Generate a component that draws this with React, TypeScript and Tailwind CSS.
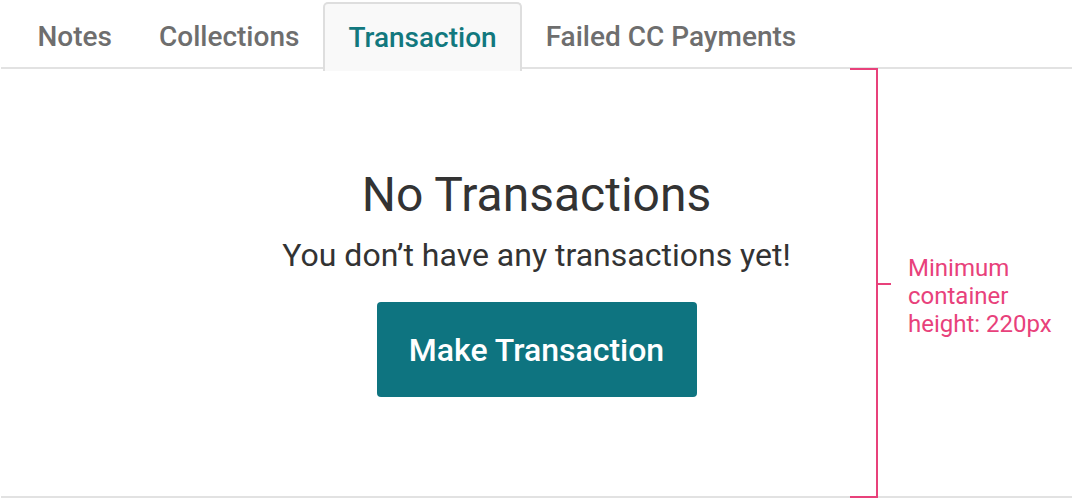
import { useState } from 'react';

const tabs = ['Notes', 'Collections', 'Transaction', 'Failed CC Payments'];

export default function App() {
  const [active, setActive] = useState('Transaction');

  return (
    <div className="relative w-[1074px] h-[502px] bg-white font-['Roboto',sans-serif] overflow-hidden">
      <div className="pl-px pr-[2px]">
        {/* Tab bar */}
        <div className="flex h-[69px] pt-[2px] pl-[13px] border-b-2 border-[#e2e2e2]">
          {tabs.map((tab) => {
            const isActive = tab === active;
            return (
              <button
                key={tab}
                type="button"
                onClick={() => setActive(tab)}
                className={`h-[67px] pt-[3px] px-[23.5px] flex items-center text-[28px] font-medium leading-none ${
                  isActive
                    ? 'relative z-10 -mb-[2px] h-[69px] pb-[2px] bg-[#f9f9f9] text-[#12787e] border-2 border-b-0 border-[#dedede] rounded-t-[5px] px-[21.5px]'
                    : 'text-[#6e6e6e]'
                }`}
              >
                {tab}
              </button>
            );
          })}
        </div>

        {/* Empty state */}
        <div className="h-[429px] flex flex-col items-center justify-center border-b-2 border-[#e2e2e2] pb-px">
          <h2 className="text-[48px] leading-[56px] text-[#333333]">No Transactions</h2>
          <p className="mt-[13px] text-[32px] leading-[38px] text-[#333333]">
            You don’t have any transactions yet!
          </p>
          <button
            type="button"
            className="mt-[28px] w-[320px] h-[95px] rounded-[4px] bg-[#0e7480] text-white text-[32px] font-medium"
          >
            Make Transaction
          </button>
        </div>
      </div>

      {/* Spec annotation */}
      <div className="absolute left-[850px] top-[68px] w-[28px] h-[430px] border-t-2 border-b-2 border-r-2 border-[#e8417b]" />
      <div className="absolute left-[877px] top-[283px] w-[14px] h-[2px] bg-[#e8417b]" />
      <div className="absolute left-[908px] top-[254px] text-[24px] leading-[28px] text-[#e8417b]">
        <p>Minimum</p>
        <p>container</p>
        <p>height: 220px</p>
      </div>
    </div>
  );
}
